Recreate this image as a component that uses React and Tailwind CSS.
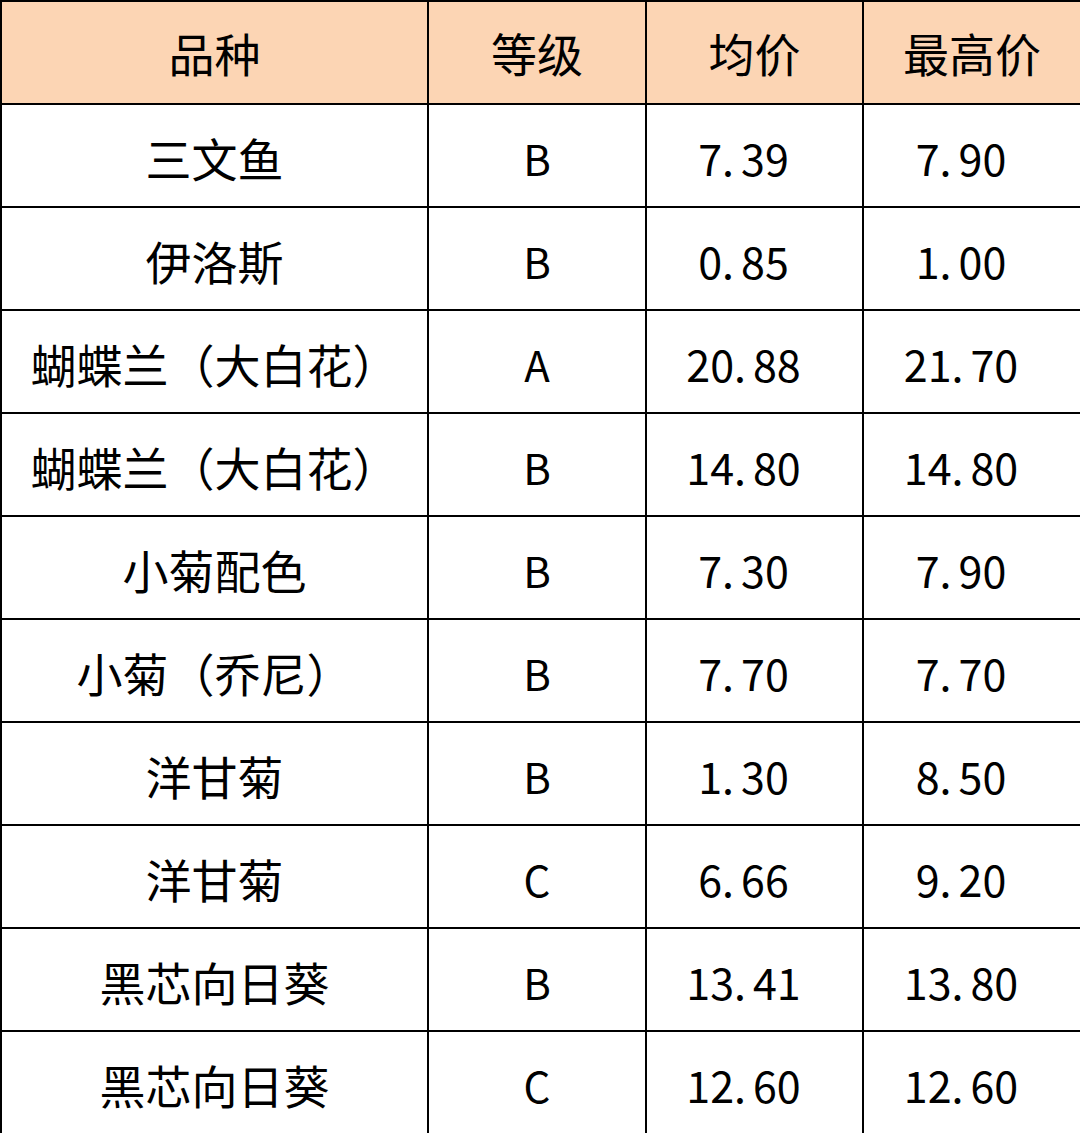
const rows = [
  ["三文鱼", "B", "7.39", "7.90"],
  ["伊洛斯", "B", "0.85", "1.00"],
  ["蝴蝶兰（大白花）", "A", "20.88", "21.70"],
  ["蝴蝶兰（大白花）", "B", "14.80", "14.80"],
  ["小菊配色", "B", "7.30", "7.90"],
  ["小菊（乔尼）", "B", "7.70", "7.70"],
  ["洋甘菊", "B", "1.30", "8.50"],
  ["洋甘菊", "C", "6.66", "9.20"],
  ["黑芯向日葵", "B", "13.41", "13.80"],
  ["黑芯向日葵", "C", "12.60", "12.60"],
];

const headers = ["品种", "等级", "均价", "最高价"];

// the source sheet puts a gap after the decimal point
const Price = ({ value }) => {
  const [whole, frac] = value.split(".");
  return (
    <span>
      {whole}.<span className="ml-[7px]">{frac}</span>
    </span>
  );
};

const App = () => {
  return (
    <div className="w-[1080px] h-[1133px] bg-white overflow-hidden font-['Noto_Sans_CJK_SC',sans-serif] text-black">
      <table className="w-[1080px] h-[1133px] border-collapse table-fixed">
        <colgroup>
          <col className="w-[427px]" />
          <col className="w-[218px]" />
          <col className="w-[217px]" />
          <col className="w-[218px]" />
        </colgroup>
        <thead>
          <tr className="h-[103px] bg-[#fcd5b4]">
            {headers.map((h) => (
              <th key={h} className="border-2 border-black text-[46px] font-normal text-center align-middle">
                {h}
              </th>
            ))}
          </tr>
        </thead>
        <tbody>
          {rows.map((r, i) => (
            <tr key={i} className="h-[103px]">
              <td className="border-2 border-black text-[46px] text-center align-middle pt-1 whitespace-nowrap">{r[0]}</td>
              <td className="border-2 border-black text-[42px] text-center align-middle pt-1">{r[1]}</td>
              <td className="border-2 border-black text-[43px] text-center align-middle pt-1 pr-[22px]">
                <Price value={r[2]} />
              </td>
              <td className="border-2 border-black text-[43px] text-center align-middle pt-1 pr-[22px]">
                <Price value={r[3]} />
              </td>
            </tr>
          ))}
        </tbody>
      </table>
    </div>
  );
};

export default App;
